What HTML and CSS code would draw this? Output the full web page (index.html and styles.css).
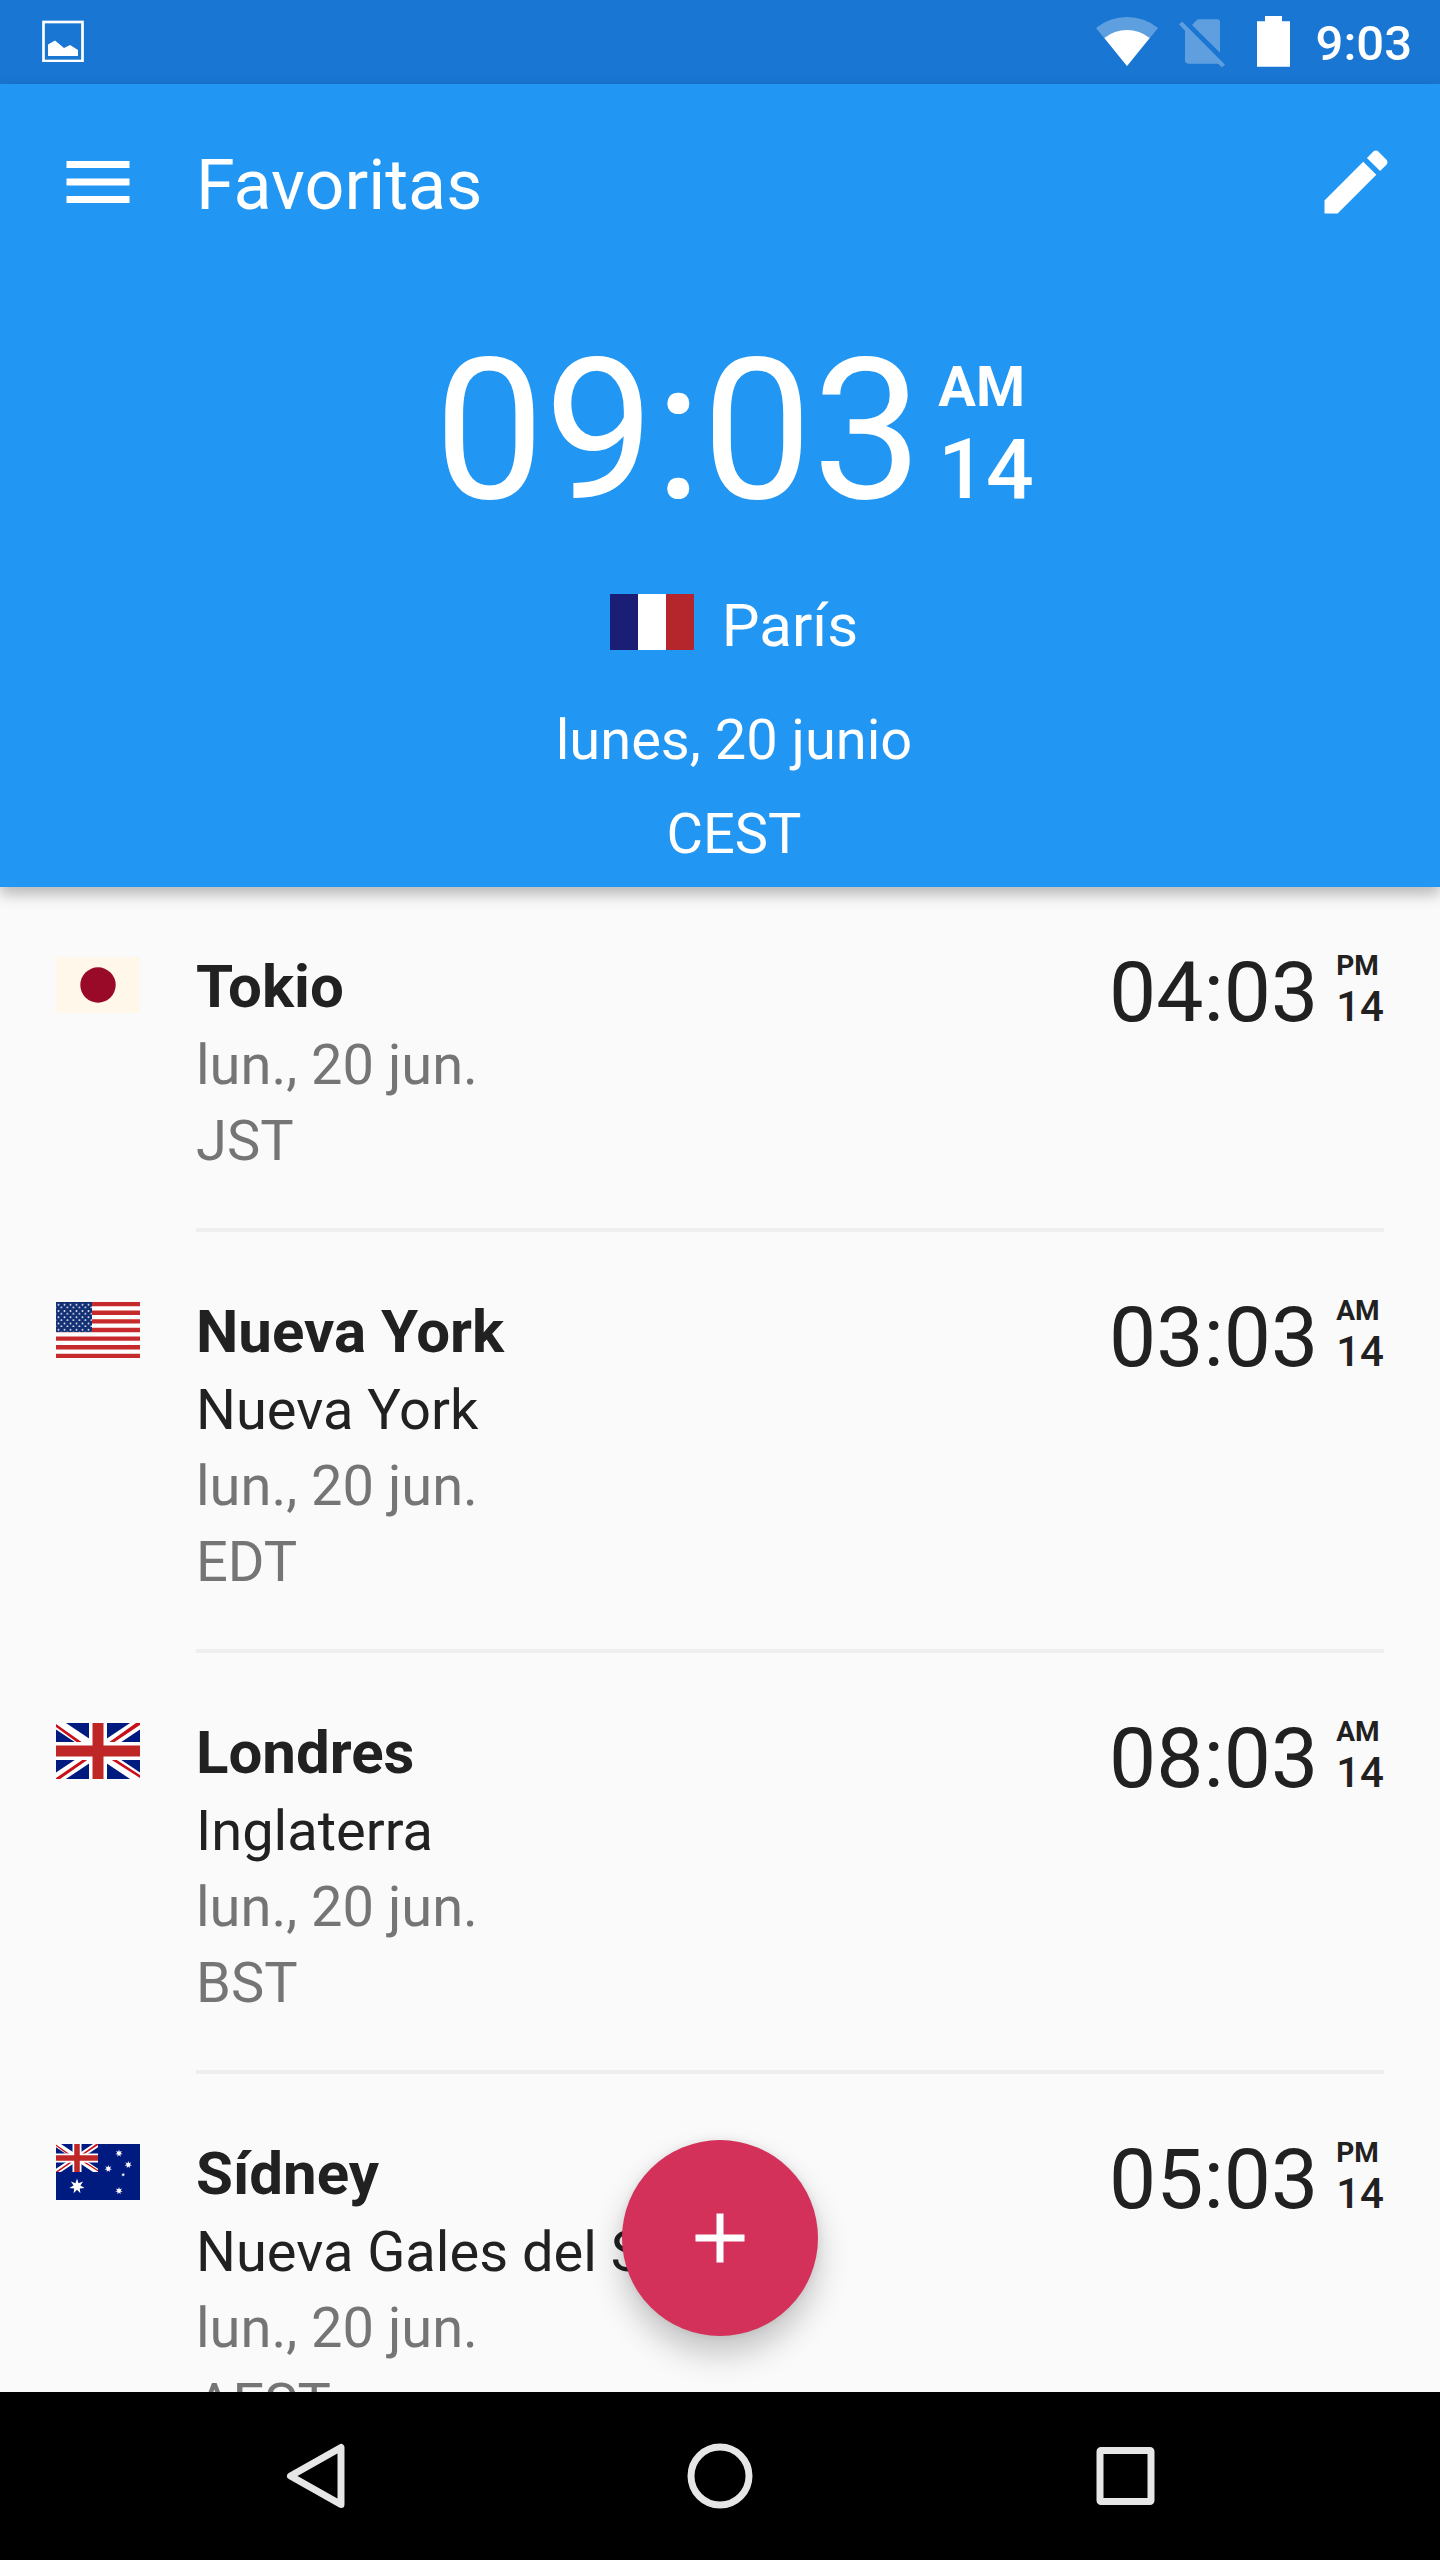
FILE: index.html
```html
<!DOCTYPE html>
<html lang="es">
<head>
<meta charset="utf-8">
<meta name="viewport" content="width=device-width, initial-scale=1">
<title>Favoritas</title>
<link rel="stylesheet" href="styles.css">
</head>
<body>
<svg class="defs" aria-hidden="true">
  <defs>
    <symbol id="union-jack" viewBox="0 0 84 56">
      <rect width="84" height="56" fill="#001b80"/>
      <path d="M0 0 84 56M84 0 0 56" stroke="#fff" stroke-width="11"/>
      <path d="M0 1V4L22 20H27ZM52 20H57L84 2V0H80ZM27 36.500H32L4 56H0V55ZM55 36.500H60L84 52V55Z" fill="#c8101a"/>
      <path d="M42 0V56M0 28H84" stroke="#fff" stroke-width="18"/>
      <path d="M42 0V56M0 28H84" stroke="#bf2626" stroke-width="11"/>
    </symbol>
    <path id="star" d="M0-10 1.950-4.050 7.820-6.230 4.390-1 9.750 2.230 3.520 2.810 4.340 9.010 0 4.500-4.340 9.010-3.520 2.810-9.750 2.230-4.390-1-7.820-6.230-1.950-4.050Z"/>
    <pattern id="star-field" width="6" height="6.260" patternUnits="userSpaceOnUse">
      <circle cx="2.500" cy="2.700" r="1" fill="#dfe3ee"/>
      <circle cx="-0.600" cy="5.700" r="1" fill="#dfe3ee"/>
      <circle cx="5.400" cy="5.700" r="1" fill="#dfe3ee"/>
    </pattern>
  </defs>
</svg>

<div class="app">
  <div class="status-bar">
    <svg class="status-picture" viewBox="0 0 42 42" aria-hidden="true">
      <rect x="1.500" y="2" width="39" height="39" fill="none" stroke="#fff" stroke-width="2.700"/>
      <path d="M6 24.500 13 20.500 22 28 28 25 36 30V36H6Z" fill="#fff"/>
    </svg>
    <svg class="status-wifi" viewBox="108 48 186 156" aria-hidden="true">
      <path d="M201 198 108 84A148 148 0 0 1 294 84Z" fill="#fff" opacity=".3"/>
      <path d="M201 198 133 114A109 109 0 0 1 269 114Z" fill="#fff"/>
    </svg>
    <svg class="status-sim" viewBox="357 48 138 156" aria-hidden="true">
      <g fill="#fff" opacity=".3">
        <path d="M396 75 413 58H472Q480 58 480 66V158Z"/>
        <path d="M357 73 367 65 495 194 486 202 474 191H385Q375 191 375 181V92Z"/>
      </g>
    </svg>
    <svg class="status-battery" viewBox="591 48 99 156" aria-hidden="true">
      <path d="M615 48H666V64H690V200H591V64H615Z" fill="#fff"/>
    </svg>
    <time class="status-clock" datetime="09:03">9:03</time>
  </div>

  <header class="header">
    <div class="toolbar">
      <button class="icon-button" type="button" aria-label="Menú">
        <svg viewBox="0 0 24 24"><path d="M3 18h18v-2H3v2zm0-5h18v-2H3v2zm0-7v2h18V6H3z"/></svg>
      </button>
      <h1 class="title">Favoritas</h1>
      <button class="icon-button" type="button" aria-label="Editar">
        <svg viewBox="0 0 24 24"><path d="M3 17.250V21h3.750L17.810 9.940l-3.750-3.750L3 17.250zM20.710 7.040c.39-.39.39-1.020 0-1.410l-2.340-2.340c-.39-.39-1.020-.39-1.410 0l-1.830 1.830 3.750 3.750 1.830-1.830z"/></svg>
      </button>
    </div>
    <section class="hero">
      <div class="hero-clock">
        <time class="hero-time" datetime="09:03:14">09:03</time>
        <div class="hero-side">
          <span class="hero-meridiem">AM</span>
          <span class="hero-seconds">14</span>
        </div>
      </div>
      <div class="hero-place">
        <svg class="flag" viewBox="0 0 84 56" role="img" aria-label="Francia">
          <rect width="28" height="56" fill="#1a1e74"/>
          <rect x="28" width="28" height="56" fill="#fff"/>
          <rect x="56" width="28" height="56" fill="#b5252c"/>
        </svg>
        <span class="hero-city">París</span>
      </div>
      <p class="hero-date">lunes, 20 junio</p>
      <p class="hero-zone">CEST</p>
    </section>
  </header>

  <main class="content">
    <ul class="city-list">
      <li class="city">
        <svg class="flag" viewBox="0 0 84 56" role="img" aria-label="Japón">
          <rect width="84" height="56" fill="#fff8ea"/>
          <circle cx="42" cy="28" r="17.700" fill="#980a28"/>
        </svg>
        <div class="city-body">
          <div class="city-info">
            <h2 class="city-name">Tokio</h2>
            <p class="city-detail">lun., 20 jun.</p>
            <p class="city-detail">JST</p>
          </div>
          <time class="city-time" datetime="16:03:14">04:03</time>
          <div class="city-side">
            <span class="city-meridiem">PM</span>
            <span class="city-seconds">14</span>
          </div>
        </div>
      </li>
      <li class="city">
        <svg class="flag" viewBox="0 0 84 56" role="img" aria-label="Estados Unidos">
          <rect width="84" height="56" fill="#fff"/>
          <path d="M0 2.150H84M0 10.770H84M0 19.380H84M0 28H84M0 36.620H84M0 45.230H84M0 53.850H84" stroke="#c62a2c" stroke-width="4.310"/>
          <rect width="36" height="30" fill="#133074"/>
          <rect width="36" height="30" fill="url(#star-field)"/>
        </svg>
        <div class="city-body">
          <div class="city-info">
            <h2 class="city-name">Nueva York</h2>
            <p class="city-region">Nueva York</p>
            <p class="city-detail">lun., 20 jun.</p>
            <p class="city-detail">EDT</p>
          </div>
          <time class="city-time" datetime="03:03:14">03:03</time>
          <div class="city-side">
            <span class="city-meridiem">AM</span>
            <span class="city-seconds">14</span>
          </div>
        </div>
      </li>
      <li class="city">
        <svg class="flag" viewBox="0 0 84 56" role="img" aria-label="Reino Unido">
          <use href="#union-jack" width="84" height="56"/>
        </svg>
        <div class="city-body">
          <div class="city-info">
            <h2 class="city-name">Londres</h2>
            <p class="city-region">Inglaterra</p>
            <p class="city-detail">lun., 20 jun.</p>
            <p class="city-detail">BST</p>
          </div>
          <time class="city-time" datetime="08:03:14">08:03</time>
          <div class="city-side">
            <span class="city-meridiem">AM</span>
            <span class="city-seconds">14</span>
          </div>
        </div>
      </li>
      <li class="city">
        <svg class="flag" viewBox="0 0 84 56" role="img" aria-label="Australia">
          <rect width="84" height="56" fill="#001b80"/>
          <use href="#union-jack" width="42" height="28"/>
          <g fill="#fff">
            <use href="#star" transform="translate(21 42.300) scale(.78)"/>
            <use href="#star" transform="translate(63 9.300) scale(.38)"/>
            <use href="#star" transform="translate(72.300 20.700) scale(.38)"/>
            <use href="#star" transform="translate(52.300 24.700) scale(.38)"/>
            <use href="#star" transform="translate(67.200 30.700) scale(.2)"/>
            <use href="#star" transform="translate(63 46.800) scale(.38)"/>
          </g>
        </svg>
        <div class="city-body">
          <div class="city-info">
            <h2 class="city-name">Sídney</h2>
            <p class="city-region">Nueva Gales del Sur</p>
            <p class="city-detail">lun., 20 jun.</p>
            <p class="city-detail">AEST</p>
          </div>
          <time class="city-time" datetime="17:03:14">05:03</time>
          <div class="city-side">
            <span class="city-meridiem">PM</span>
            <span class="city-seconds">14</span>
          </div>
        </div>
      </li>
    </ul>
    <button class="fab" type="button" aria-label="Añadir ciudad">
      <svg viewBox="0 0 24 24"><path d="M19 13h-6v6h-2v-6H5v-2h6V5h2v6h6v2z"/></svg>
    </button>
  </main>

  <nav class="nav-bar" aria-label="Sistema">
    <button class="nav-button" type="button" aria-label="Atrás">
      <svg viewBox="0 0 84 84"><path d="M69 13.500V70.500L18.500 42Z" stroke-linejoin="round"/></svg>
    </button>
    <button class="nav-button" type="button" aria-label="Inicio">
      <svg viewBox="0 0 84 84"><circle cx="42" cy="42" r="29"/></svg>
    </button>
    <button class="nav-button" type="button" aria-label="Recientes">
      <svg viewBox="0 0 84 84"><rect x="16" y="16.500" width="51" height="51" rx="1"/></svg>
    </button>
  </nav>
</div>
</body>
</html>
```

FILE: styles.css
```css
* {
  box-sizing: border-box;
}

body {
  margin: 0;
  background: #fafafa;
  color: #212121;
  font-family: Roboto, "Noto Sans", sans-serif;
  font-size: 56px;
  line-height: 76px;
}

h1,
h2,
p,
ul {
  margin: 0;
  padding: 0;
}

button {
  margin: 0;
  padding: 0;
  border: 0;
  background: none;
  cursor: pointer;
}

svg {
  display: block;
  flex: none;
}

.defs {
  position: absolute;
  width: 0;
  height: 0;
}

.app {
  display: flex;
  flex-direction: column;
  height: 100vh;
}

/* System status bar */
.status-bar {
  display: flex;
  align-items: flex-start;
  flex: none;
  padding: 0 28px 0 42px;
  background: #1976d2;
  color: #fff;
}

.status-picture {
  width: 42px;
  height: 42px;
  margin: 20px auto 0 0;
}

.status-wifi,
.status-sim,
.status-battery {
  height: 52px;
  margin-top: 16px;
}

.status-wifi {
  width: 62px;
  margin-right: 21px;
}

.status-sim {
  width: 46px;
  margin-right: 32px;
}

.status-battery {
  width: 33px;
  margin-right: 26px;
}

.status-clock {
  padding-top: 4px;
  font-size: 49px;
  font-weight: 500;
  line-height: 80px;
}

/* App header with the main clock */
.header {
  position: relative;
  z-index: 1;
  flex: none;
  background: #2196f3;
  color: #fff;
  box-shadow: 0 7px 14px rgba(0, 0, 0, 0.28);
}

.toolbar {
  display: flex;
  align-items: center;
  height: 196px;
  padding: 0 42px 0 56px;
}

.icon-button svg,
.fab svg {
  width: 84px;
  height: 84px;
  fill: #fff;
}

.title {
  flex: 1;
  padding: 6px 0 0 56px;
  font-size: 70px;
  font-weight: 400;
  line-height: 84px;
}

.hero {
  display: flex;
  flex-direction: column;
  align-items: center;
  padding: 53px 0 15px 28px;
}

.hero-clock {
  display: flex;
  gap: 16px;
}

.hero-time {
  font-size: 196px;
  line-height: 196px;
}

.hero-side {
  display: flex;
  flex-direction: column;
  gap: 13px;
  padding-top: 26px;
}

.hero-meridiem {
  font-weight: 700;
  line-height: 56px;
}

.hero-seconds {
  font-size: 84px;
  font-weight: 500;
  line-height: 84px;
}

.hero-place {
  display: flex;
  gap: 28px;
  margin-top: 59px;
}

.hero-place .flag {
  margin-top: 6px;
}

.hero-city {
  font-size: 60px;
}

.hero-date {
  margin-top: 38px;
}

.hero-zone {
  margin-top: 18px;
}

.flag {
  width: 84px;
  height: 56px;
}

/* Favourite cities */
.content {
  position: relative;
  flex: 1;
  min-height: 0;
}

.city-list {
  height: 100%;
  overflow-y: auto;
  list-style: none;
  scrollbar-width: none;
}

.city {
  display: flex;
  gap: 56px;
  padding: 0 56px;
}

.city .flag {
  margin-top: 70px;
}

.city-body {
  display: flex;
  flex: 1;
  align-items: flex-start;
  min-width: 0;
  padding: 60px 0 49px;
  border-bottom: 4px solid #eee;
}

.city-info {
  flex: 1;
  min-width: 0;
}

.city-name {
  font-size: 60px;
  font-weight: 700;
  line-height: 80px;
}

.city-detail {
  color: #757575;
}

.city-time {
  font-size: 84px;
  line-height: 92px;
}

.city-side {
  display: flex;
  flex-direction: column;
  margin-left: 18px;
}

.city-meridiem {
  font-size: 28px;
  font-weight: 700;
  line-height: 38px;
}

.city-seconds {
  font-size: 42px;
  font-weight: 500;
  line-height: 44px;
}

.fab {
  position: absolute;
  bottom: 56px;
  left: calc(50% - 98px);
  display: flex;
  align-items: center;
  justify-content: center;
  width: 196px;
  height: 196px;
  border-radius: 50%;
  background: #d3305a;
  box-shadow: 0 18px 32px rgba(0, 0, 0, 0.22), 0 0 10px rgba(0, 0, 0, 0.08);
}

/* System navigation bar */
.nav-bar {
  display: flex;
  flex: none;
  padding: 0 111px;
  background: #000;
}

.nav-button {
  display: flex;
  flex: 1;
  align-items: center;
  justify-content: center;
  height: 168px;
}

.nav-button svg {
  width: 84px;
  height: 84px;
  fill: none;
  stroke: #e6e6e6;
  stroke-width: 7px;
}
```
